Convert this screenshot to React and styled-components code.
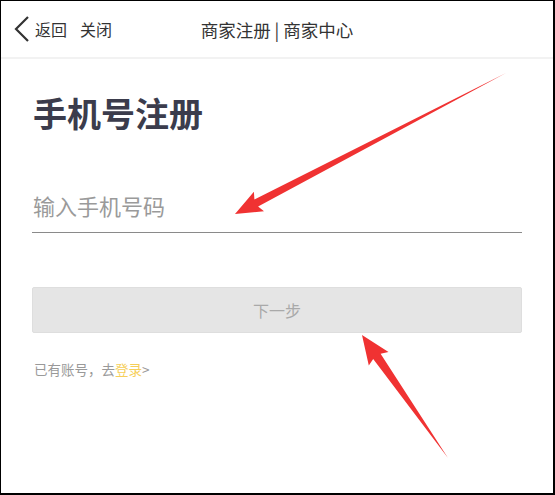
import React from "react";
import styled, { createGlobalStyle } from "styled-components";

const Global = createGlobalStyle`
  html, body { margin: 0; padding: 0; background: #fff; }
  body { font-family: "Noto Sans CJK SC", "Noto Sans", sans-serif; }
  * { box-sizing: border-box; }
`;

const Frame = styled.div`
  position: relative;
  width: 555px;
  height: 495px;
  border-style: solid;
  border-color: #000;
  border-width: 1px 2px 2px 1px;
  background: #fff;
  overflow: hidden;
`;

const Header = styled.header`
  height: 58px;
  display: flex;
  align-items: center;
  position: relative;
  border-bottom: 2px solid #f2f2f2;
  padding-left: 12px;
`;

const NavLeft = styled.div`
  display: flex;
  align-items: center;
  gap: 13px;
  z-index: 1;
`;

const NavButton = styled.span`
  display: flex;
  align-items: center;
  font-size: 16px;
  color: #333;
  gap: 2px;
`;

const Title = styled.div`
  position: absolute;
  left: 0;
  right: 0;
  text-align: center;
  font-size: 17.5px;
  color: #333;
`;

const Main = styled.main`
  padding: 0 31px 0 31px;
`;

const Heading = styled.h1`
  margin: 30px 0 0 1px;
  font-size: 34px;
  line-height: 48px;
  font-weight: 700;
  color: #3b3c4c;
`;

const Field = styled.div`
  margin-top: 51px;
  border-bottom: 1px solid #8a8a8a;
  padding: 0 0 10px 1px;
`;

const Input = styled.input`
  border: none;
  outline: none;
  width: 100%;
  font-family: inherit;
  font-size: 22px;
  line-height: 34px;
  color: #333;
  padding: 0;
  background: transparent;
  &::placeholder { color: #9a9a9a; }
`;

const Button = styled.button`
  display: block;
  width: 100%;
  margin-top: 54px;
  height: 46px;
  border: 1px solid #dedede;
  border-radius: 2px;
  background: #e5e5e5;
  font-family: inherit;
  font-size: 16px;
  color: #a9a9a9;
`;

const Hint = styled.p`
  margin: 26px 0 0 2px;
  font-size: 13.5px;
  color: #999;
`;

const Link = styled.span`
  color: #f6cf5a;
`;

const Overlay = styled.svg`
  position: absolute;
  left: -1px;
  top: -1px;
  pointer-events: none;
`;

function arrowPoints(tail, tip, headLen, headHalf, shaftHalf) {
  const dx = tip[0] - tail[0];
  const dy = tip[1] - tail[1];
  const len = Math.hypot(dx, dy);
  const ux = dx / len, uy = dy / len;
  const nx = -uy, ny = ux;
  const bx = tip[0] - ux * headLen, by = tip[1] - uy * headLen;
  const pts = [
    [tail[0], tail[1]],
    [bx + nx * shaftHalf, by + ny * shaftHalf],
    [bx + nx * headHalf - ux * 3, by + ny * headHalf - uy * 3],
    [tip[0], tip[1]],
    [bx - nx * headHalf - ux * 3, by - ny * headHalf - uy * 3],
    [bx - nx * shaftHalf, by - ny * shaftHalf],
  ];
  return pts.map((p) => p.map((v) => v.toFixed(1)).join(",")).join(" ");
}

function Arrows() {
  return (
    <Overlay width="555" height="495" viewBox="0 0 555 495">
      <polygon points={arrowPoints([506, 73], [235, 214], 24, 11, 4)} fill="#f03232" />
      <polygon points={arrowPoints([448, 458], [362, 335], 26, 12, 4.5)} fill="#f03232" />
    </Overlay>
  );
}

export default function App() {
  return (
    <>
      <Global />
      <Frame>
        <Header>
          <NavLeft>
            <NavButton>
              <svg width="20" height="26" viewBox="0 0 20 26">
                <path d="M15 1 L3 13 L15 25" fill="none" stroke="#333" strokeWidth="2.2" />
              </svg>
              返回
            </NavButton>
            <NavButton>关闭</NavButton>
          </NavLeft>
          <Title>商家注册 | 商家中心</Title>
        </Header>
        <Main>
          <Heading>手机号注册</Heading>
          <Field>
            <Input placeholder="输入手机号码" />
          </Field>
          <Button>下一步</Button>
          <Hint>
            已有账号，去<Link>登录</Link>&gt;
          </Hint>
        </Main>
        <Arrows />
      </Frame>
    </>
  );
}
